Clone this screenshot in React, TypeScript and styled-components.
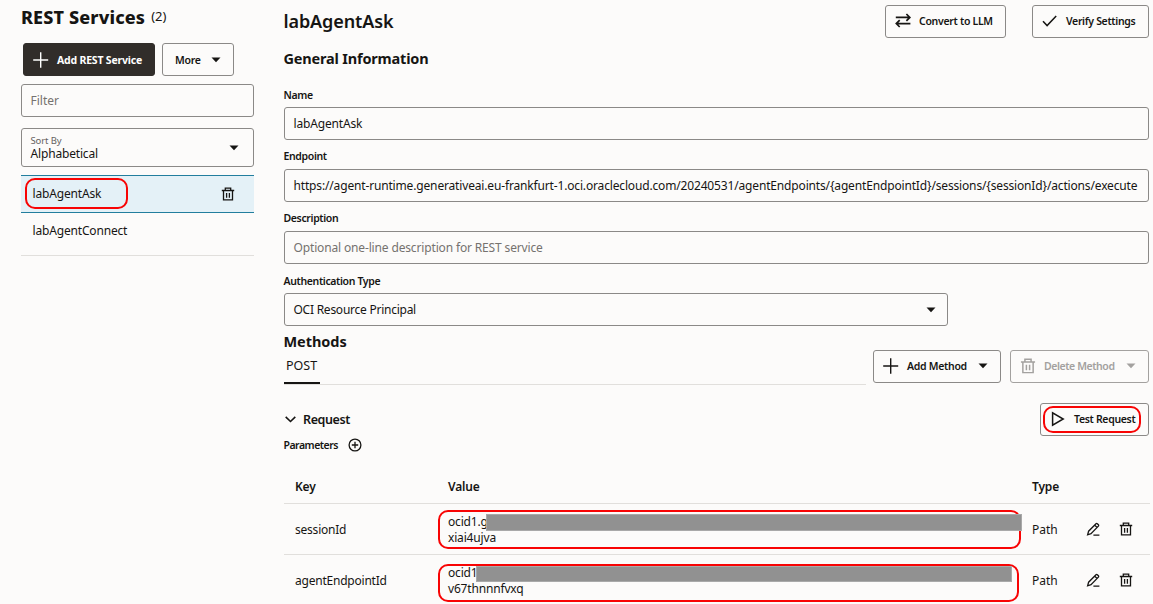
import React from "react";
import styled, { createGlobalStyle, css } from "styled-components";

const ink = "#161513";
const line = "#8b8987";
const rule = "#e1dfdc";
const red = "#f80404";

const GlobalStyle = createGlobalStyle`
  * { box-sizing: border-box; }
  body {
    margin: 0;
    background: #fcfbfa;
    color: ${ink};
    font-family: "Noto Sans", "Open Sans", sans-serif;
    font-size: 12px;
    line-height: 16px;
    overflow: hidden;
  }
  svg { display: block; flex: none; }
`;

const Page = styled.div`
  display: flex;
  width: 1153px;
  height: 604px;
  overflow: hidden;
`;

const Sidebar = styled.aside`
  width: 233px;
  margin-left: 21px;
  flex: none;
`;

const Main = styled.main`
  width: 866px;
  margin-left: 30px;
  flex: none;
`;

const Label = styled.span<{ $ls?: number }>`
  white-space: nowrap;
  letter-spacing: ${(p) => p.$ls ?? -0.17}px;
`;

const SideHeading = styled.header`
  display: flex;
  align-items: center;
  gap: 6px;
  height: 33px;
  margin-bottom: 10px;
`;

const SideTitle = styled.h1`
  margin: 0;
  font-size: 18px;
  line-height: 24px;
  font-weight: 800;
  letter-spacing: 0.14px;
  white-space: nowrap;
`;

const Count = styled.span`
  font-size: 13px;
  line-height: 14px;
  padding-bottom: 1px;
`;

const SideActions = styled.div`
  display: flex;
  gap: 7px;
  padding-left: 2px;
  margin-bottom: 8px;
`;

const Button = styled.button<{ $w: number; $primary?: boolean; $ls?: number }>`
  position: relative;
  display: flex;
  align-items: center;
  flex: none;
  gap: 8px;
  width: ${(p) => p.$w}px;
  height: 33px;
  padding: 0 0 1px 9px;
  border: 1px solid ${line};
  border-radius: 3px;
  background: transparent;
  color: ${ink};
  font: 600 10.5px/16px "Noto Sans", "Open Sans", sans-serif;
  letter-spacing: ${(p) => p.$ls ?? -0.3}px;
  white-space: nowrap;
  ${(p) =>
    p.$primary &&
    css`
      background: #312d2a;
      border-color: #312d2a;
      color: #fff;
      font-weight: 700;
      padding-bottom: 0;
    `}
  &:disabled {
    color: #a3a19f;
    border-color: #a3a19f;
  }
`;

const PlainButton = styled(Button)`
  padding: 0 0 0 12px;
`;

const CaretSlot = styled.span<{ $right?: number }>`
  display: flex;
  margin-left: auto;
  margin-right: ${(p) => p.$right ?? 12}px;
`;

const Field = styled.div<{ $w?: string }>`
  display: flex;
  align-items: center;
  width: ${(p) => p.$w ?? "865px"};
  height: 33px;
  padding: 0 8.5px;
  border: 1px solid ${line};
  border-radius: 3px;
`;

const Placeholder = styled(Label)`
  color: #75726f;
`;

const SortField = styled(Field)`
  height: 39px;
  margin: 11px 0 8px;
`;

const Stack = styled.div`
  display: flex;
  flex-direction: column;
`;

const SortCaption = styled.span`
  font-size: 9.5px;
  line-height: 12px;
  color: #65625f;
  letter-spacing: -0.1px;
`;

const SortValue = styled(Label)`
  line-height: 14px;
`;

const ServiceRow = styled.div<{ $selected?: boolean }>`
  position: relative;
  display: flex;
  align-items: ${(p) => (p.$selected ? "center" : "flex-start")};
  justify-content: space-between;
  height: ${(p) => (p.$selected ? 38 : 43)}px;
  padding: ${(p) => (p.$selected ? "0 19px 0 11.5px" : "10px 12px 0 11.5px")};
  border-bottom: 1px solid ${rule};
  ${(p) =>
    p.$selected &&
    css`
      background: #e4f1f7;
      border-top: 1px solid #227e9e;
      border-bottom-color: #227e9e;
    `}
`;

const Highlight = styled.i<{ $x: number; $y: number; $w: number; $h: number }>`
  position: absolute;
  left: ${(p) => p.$x}px;
  top: ${(p) => p.$y}px;
  width: ${(p) => p.$w}px;
  height: ${(p) => p.$h}px;
  border: 2px solid ${red};
  border-radius: 10px;
  pointer-events: none;
`;

const Redaction = styled.i<{ $x: number; $y: number; $w: number; $h: number }>`
  position: absolute;
  left: ${(p) => p.$x}px;
  top: ${(p) => p.$y}px;
  width: ${(p) => p.$w}px;
  height: ${(p) => p.$h}px;
  background: #919191;
  border: 1px solid #a9a9a9;
`;

const TopBar = styled.header`
  display: flex;
  align-items: flex-start;
  width: 865px;
  height: 33px;
  margin-top: 5px;
`;

const Title = styled.h2`
  flex: 1;
  margin: 4px 0 0 -0.5px;
  font-size: 18px;
  line-height: 24px;
  font-weight: 600;
  letter-spacing: -0.1px;
`;

const TopActions = styled.div`
  display: flex;
  gap: 26px;
`;

const SectionTitle = styled.h3<{ $top: number; $ls?: number }>`
  margin: ${(p) => p.$top}px 0 0 -0.5px;
  font-size: 14.5px;
  line-height: 20px;
  font-weight: 700;
  letter-spacing: ${(p) => p.$ls ?? 0}px;
`;

const Caption = styled.div<{ $top: number; $bottom?: number }>`
  margin: ${(p) => p.$top}px 0 ${(p) => p.$bottom ?? 5}px -0.5px;
  font-size: 10.5px;
  line-height: 14px;
  font-weight: 600;
  letter-spacing: -0.36px;
`;

const MethodBar = styled.div`
  display: flex;
  width: 865px;
  height: 35px;
  margin-top: -1px;
`;

const TabList = styled.div`
  display: flex;
  width: 582px;
  margin-right: 7px;
  border-bottom: 1px solid ${rule};
`;

const Tab = styled.div`
  width: 36px;
  height: 34px;
  padding: 8px 0 0 2px;
  border-bottom: 2px solid ${ink};
  font-size: 12.5px;
`;

const MethodActions = styled.div`
  display: flex;
  gap: 9px;
`;

const RequestBar = styled.div`
  display: flex;
  align-items: center;
  justify-content: space-between;
  width: 865px;
  height: 33px;
  margin-top: 18px;
`;

const RequestToggle = styled.div`
  display: flex;
  align-items: center;
  gap: 7px;
  padding-left: 1px;
  font-size: 12.5px;
  font-weight: 600;
  letter-spacing: -0.4px;
`;

const ParamBar = styled.div`
  display: flex;
  align-items: center;
  height: 16px;
  margin: 1px 0 0 -0.5px;
  gap: 10px;
  font-size: 10.5px;
  font-weight: 600;
`;

const Row = styled.div<{ $h: number }>`
  position: relative;
  display: grid;
  grid-template-columns: 153px 584px 54px 33px 1fr;
  align-items: center;
  height: ${(p) => p.$h}px;
  padding: 1px 0 0 11px;
  border-bottom: 1px solid ${rule};

  svg { margin-bottom: 2px; }
`;

const HeadRow = styled(Row)`
  margin-top: 17px;
  font-weight: 600;
`;

const Caret = () => (
  <svg width="10" height="6" viewBox="0 0 10 6">
    <path d="M.5 .5h9L5 5.2z" fill="currentColor" />
  </svg>
);

const Plus = () => (
  <svg width="16" height="16" viewBox="0 0 16 16" fill="none" stroke="currentColor" strokeWidth="1.4">
    <path d="M7.7 .3v15.4M.2 8h15" />
  </svg>
);

const Swap = () => (
  <svg width="16" height="16" viewBox="0 0 16 16" fill="none" stroke="currentColor" strokeWidth="1.7">
    <path d="M.8 4.4h14M11.4 1l3.4 3.4-3.4 3.4M15.4 10.6h-14M4.7 7.2 1.3 10.6l3.4 3.4" />
  </svg>
);

const Check = () => (
  <svg width="16" height="16" viewBox="0 0 16 16" fill="none" stroke="currentColor" strokeWidth="1.5">
    <path d="M1 8.2 5.1 12.6 14.2 3" />
  </svg>
);

const Play = () => (
  <svg width="16" height="16" viewBox="0 0 16 16" fill="none" stroke="currentColor" strokeWidth="1.5">
    <path d="M2.6 1.9v12.2L13.2 8z" />
  </svg>
);

const Trash = ({ size = 14 }: { size?: number }) => (
  <svg width={size} height={size} viewBox="0 0 14 14" fill="none" stroke="currentColor" strokeWidth="1.3">
    <path d="M.8 3.5h12.4M4.3 3.2V1.1h5.4v2.1M2.5 3.7v9.1h9V3.7M5.6 6v4.7M8.4 6v4.7" />
  </svg>
);

const Pencil = () => (
  <svg width="14" height="14" viewBox="0 0 14 14" fill="none" stroke="currentColor" strokeWidth="1.3">
    <path d="M1.6 12.8 2.6 9.2 10 1.7a.9 .9 0 0 1 1.3 0l1.1 1.1a.9 .9 0 0 1 0 1.3L5 11.7zM8.8 3.2l2.2 2.2M7.4 13.1H13.4" />
  </svg>
);

const Chevron = () => (
  <svg width="11" height="7" viewBox="0 0 11 7" fill="none" stroke="currentColor" strokeWidth="1.6">
    <path d="M.7 .9 5.5 5.5 10.3 .9" />
  </svg>
);

const CirclePlus = () => (
  <svg width="14" height="14" viewBox="0 0 14 14" fill="none" stroke="currentColor" strokeWidth="1.3">
    <circle cx="7" cy="7" r="5.9" />
    <path d="M7 3.8v6.4M3.8 7h6.4" />
  </svg>
);

const parameters = [
  { key: "sessionId", start: "ocid1.g", end: "xiai4ujva", box: [154, 6, 583, 39], bar: [202, 10, 536, 17] },
  { key: "agentEndpointId", start: "ocid1", end: "v67thnnnfvxq", box: [154, 9, 581, 38], bar: [192, 11, 536, 16] },
];

export default function App() {
  return (
    <Page>
      <GlobalStyle />
      <Sidebar>
        <SideHeading>
          <SideTitle>REST Services</SideTitle>
          <Count>(2)</Count>
        </SideHeading>
        <SideActions>
          <Button $w={132} $ls={-0.2} $primary>
            <Plus />
            Add REST Service
          </Button>
          <PlainButton $w={72}>
            More
            <CaretSlot><Caret /></CaretSlot>
          </PlainButton>
        </SideActions>
        <Field $w="233px">
          <Placeholder $ls={0}>Filter</Placeholder>
        </Field>
        <SortField $w="233px">
          <Stack>
            <SortCaption>Sort By</SortCaption>
            <SortValue>Alphabetical</SortValue>
          </Stack>
          <CaretSlot $right={6}><Caret /></CaretSlot>
        </SortField>
        <ServiceRow $selected>
          <Label>labAgentAsk</Label>
          <Trash />
          <Highlight $x={4} $y={2} $w={103} $h={31} />
        </ServiceRow>
        <ServiceRow>
          <Label>labAgentConnect</Label>
        </ServiceRow>
      </Sidebar>
      <Main>
        <TopBar>
          <Title>labAgentAsk</Title>
          <TopActions>
            <Button $w={121}>
              <Swap />
              Convert to LLM
            </Button>
            <Button $w={117} $ls={-0.33}>
              <Check />
              Verify Settings
            </Button>
          </TopActions>
        </TopBar>
        <SectionTitle $top={10} $ls={-0.18}>General Information</SectionTitle>
        <Caption $top={20}>Name</Caption>
        <Field><Label>labAgentAsk</Label></Field>
        <Caption $top={9} $bottom={6}>Endpoint</Caption>
        <Field>
          <Label $ls={-0.158}>
            https://agent-runtime.generativeai.eu-frankfurt-1.oci.oraclecloud.com/20240531/agentEndpoints/{"{agentEndpointId}"}/sessions/{"{sessionId}"}/actions/execute
          </Label>
        </Field>
        <Caption $top={9} $bottom={6}>Description</Caption>
        <Field><Placeholder $ls={-0.15}>Optional one-line description for REST service</Placeholder></Field>
        <Caption $top={10}>Authentication Type</Caption>
        <Field $w="664px">
          <Label $ls={-0.25}>OCI Resource Principal</Label>
          <CaretSlot $right={3}><Caret /></CaretSlot>
        </Field>
        <SectionTitle $top={5} $ls={-0.05}>Methods</SectionTitle>
        <MethodBar>
          <TabList>
            <Tab>POST</Tab>
          </TabList>
          <MethodActions>
            <Button $w={128}>
              <Plus />
              Add Method
              <CaretSlot><Caret /></CaretSlot>
            </Button>
            <Button $w={139} $ls={-0.42} disabled>
              <Trash size={16} />
              Delete Method
              <CaretSlot><Caret /></CaretSlot>
            </Button>
          </MethodActions>
        </MethodBar>
        <RequestBar>
          <RequestToggle>
            <Chevron />
            Request
          </RequestToggle>
          <Button $w={109} $ls={-0.33}>
            <Play />
            Test Request
            <Highlight $x={2} $y={2} $w={98} $h={27} />
          </Button>
        </RequestBar>
        <ParamBar>
          <Label $ls={-0.5}>Parameters</Label>
          <CirclePlus />
        </ParamBar>
        <HeadRow $h={34}>
          <Label>Key</Label>
          <Label>Value</Label>
          <Label>Type</Label>
        </HeadRow>
        {parameters.map((p) => (
          <Row $h={51} key={p.key}>
            <Label $ls={-0.22}>{p.key}</Label>
            <Stack>
              <Label>{p.start}</Label>
              <Label>{p.end}</Label>
            </Stack>
            <Label $ls={0}>Path</Label>
            <Pencil />
            <Trash />
            <Highlight $x={p.box[0]} $y={p.box[1]} $w={p.box[2]} $h={p.box[3]} />
            <Redaction $x={p.bar[0]} $y={p.bar[1]} $w={p.bar[2]} $h={p.bar[3]} />
          </Row>
        ))}
      </Main>
    </Page>
  );
}
